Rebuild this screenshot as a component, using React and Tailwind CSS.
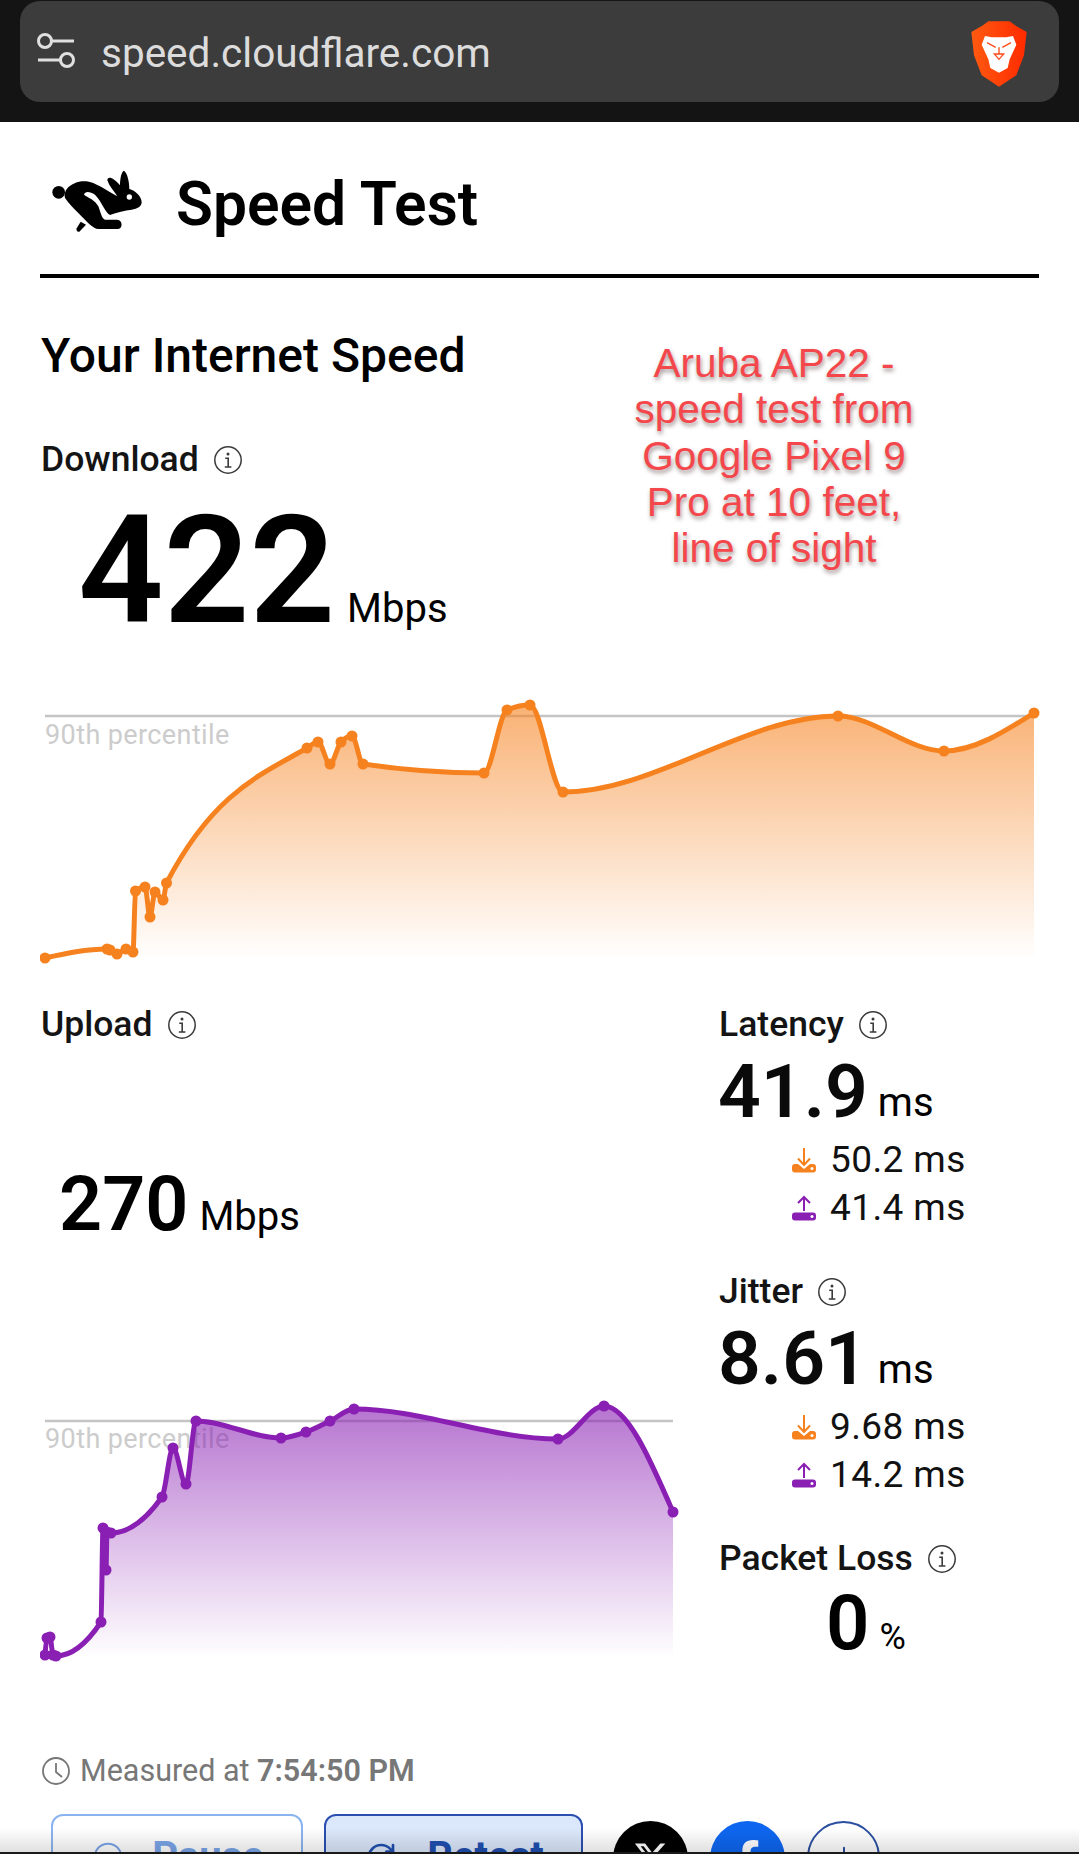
import { CirclePause, Plus, RotateCw } from "lucide-react";
import { FaFacebookF, FaXTwitter } from "react-icons/fa6";

const downloadPoints = [
  [45, 957], [107, 948], [110, 949], [117, 953], [126, 948], [133, 951], [135.5, 890], [145, 886],
  [150, 916], [155, 891], [163, 899], [166.5, 882], [307, 747], [318, 741], [330, 763], [341, 741],
  [352, 735], [363, 763], [484, 772], [507, 709], [530, 704], [563, 791], [838, 715], [944, 750], [1034, 712],
];

const uploadPoints = [
  [45, 1655], [47, 1638], [50, 1637], [53, 1655], [56, 1656], [101, 1622], [103, 1528], [106, 1570],
  [107, 1532], [111, 1533], [162, 1497], [173, 1448], [186, 1484], [196, 1421], [281, 1438], [306, 1432],
  [330, 1421], [354, 1409], [558, 1439], [604, 1406], [673, 1512],
];

// same maths as a monotone-x line
const sign = (v) => (v < 0 ? -1 : 1);
const slope3 = (a, b, c) => {
  const h0 = b[0] - a[0];
  const h1 = c[0] - b[0];
  const s0 = (b[1] - a[1]) / h0;
  const s1 = (c[1] - b[1]) / h1;
  const p = (s0 * h1 + s1 * h0) / (h0 + h1);
  return (sign(s0) + sign(s1)) * Math.min(Math.abs(s0), Math.abs(s1), 0.5 * Math.abs(p)) || 0;
};

const monotonePath = (pts) => {
  const t = pts.map((p, i) => (i === 0 || i === pts.length - 1 ? null : slope3(pts[i - 1], p, pts[i + 1])));
  t[0] = (3 * (pts[1][1] - pts[0][1])) / (pts[1][0] - pts[0][0]) / 2 - t[1] / 2;
  const n = pts.length - 1;
  t[n] = (3 * (pts[n][1] - pts[n - 1][1])) / (pts[n][0] - pts[n - 1][0]) / 2 - t[n - 1] / 2;
  let d = `M${pts[0][0]} ${pts[0][1]}`;
  for (let i = 1; i <= n; i++) {
    const dx = (pts[i][0] - pts[i - 1][0]) / 3;
    d += `C${pts[i - 1][0] + dx} ${pts[i - 1][1] + dx * t[i - 1]} ${pts[i][0] - dx} ${pts[i][1] - dx * t[i]} ${pts[i][0]} ${pts[i][1]}`;
  }
  return d;
};

const Chart = ({ id, points, color, viewBox, width, height, lineY, lineX2, labelY, bottom }) => {
  const line = monotonePath(points);
  const last = points[points.length - 1];
  return (
    <svg width={width} height={height} viewBox={viewBox} className="block">
      <defs>
        <linearGradient id={id} x1="0" y1="0" x2="0" y2="1">
          <stop offset="0" stopColor={color} stopOpacity="0.62" />
          <stop offset="1" stopColor={color} stopOpacity="0" />
        </linearGradient>
      </defs>
      <line x1="45" x2={lineX2} y1={lineY} y2={lineY} stroke="#c4c4c4" strokeWidth="2.5" />
      <text x="45" y={labelY} fill="#cccccc" fontSize="27" fontFamily="Roboto, sans-serif" letterSpacing="0.4">
        90th percentile
      </text>
      <path d={`${line}L${last[0]} ${bottom}L${points[0][0]} ${bottom}Z`} fill={`url(#${id})`} />
      <path d={line} fill="none" stroke={color} strokeWidth="5" strokeLinejoin="round" />
      {points.map((p, i) => (
        <circle key={i} cx={p[0]} cy={p[1]} r="5.5" fill={color} />
      ))}
    </svg>
  );
};

const InfoIcon = () => (
  <svg width="30" height="30" viewBox="0 0 30 30" fill="none" stroke="#3a3a3a" className="shrink-0">
    <circle cx="15" cy="15" r="13.2" strokeWidth="1.5" />
    <circle cx="15" cy="9" r="1.5" fill="#3a3a3a" stroke="none" />
    <path d="M12.2 13.2H15.2V21.8M11.8 22H18.4" strokeWidth="1.6" />
  </svg>
);

const DownIcon = () => (
  <svg width="26" height="26" viewBox="0 0 26 26" className="shrink-0">
    <path d="M1 20C1 18 2 17 4 17H7L13 22L19 17H22C24 17 25 18 25 20V22.5C25 24.5 24 25.5 22 25.5H4C2 25.5 1 24.5 1 22.5Z" fill="#f6821f" />
    <circle cx="21" cy="21.5" r="1.5" fill="#fff" />
    <path d="M13 1V18M7 11.5L13 18L19 11.5" fill="none" stroke="#f6821f" strokeWidth="2" />
  </svg>
);

const UpIcon = () => (
  <svg width="26" height="26" viewBox="0 0 26 26" className="shrink-0">
    <path d="M1 20.5C1 18.5 2 17.5 4 17.5H22C24 17.5 25 18.5 25 20.5V22.5C25 24.5 24 25.5 22 25.5H4C2 25.5 1 24.5 1 22.5Z" fill="#8a1fb3" />
    <circle cx="21" cy="21.5" r="1.5" fill="#fff" />
    <path d="M13 16V2M7 8L13 2L19 8" fill="none" stroke="#8a1fb3" strokeWidth="2" />
  </svg>
);

const Label = ({ children }) => (
  <div className="flex h-10 items-center gap-[14px] text-[35.5px] font-medium text-[#141414]">
    <span>{children}</span>
    <InfoIcon />
  </div>
);

const SubRow = ({ icon, value }) => (
  <div className="flex h-12 items-center gap-[13px] pl-[72px] text-[37px] tracking-[0.4px] text-[#111]">
    {icon}
    <span>{value}</span>
  </div>
);

const Metric = ({ label, value, down, up }) => (
  <div>
    <Label>{label}</Label>
    <div className="-ml-[1px] flex h-[88px] items-end gap-[10px] pb-[4px] leading-none">
      <span className="text-[75px] font-semibold text-[#0a0a0a]">{value}</span>
      <span className="pb-[6px] text-[40px]">ms</span>
    </div>
    <div className="mt-[3px]">
      <SubRow icon={<DownIcon />} value={down} />
      <SubRow icon={<UpIcon />} value={up} />
    </div>
  </div>
);

const Rabbit = () => (
  <svg width="130" height="100" viewBox="0 0 390 300" className="shrink-0">
    <circle cx="86" cy="118" r="19" fill="#000" />
    <path
      fillRule="evenodd"
      fill="#000"
      d="M112 106C125 90 150 82 170 85C195 88 225 110 262 130C250 112 238 100 232 82C232 68 250 72 270 97C270 75 275 55 282 53C292 60 298 85 298 108C315 112 335 130 335 148C335 160 322 168 305 170C285 172 260 178 240 186C225 178 215 145 195 125C180 115 165 113 162 125C175 135 195 140 205 160C212 178 215 197 225 200H262C278 200 280 228 262 228H205C190 228 170 205 150 185C130 165 115 150 105 135C102 125 105 115 112 106Z"
    />
    <circle cx="298" cy="132" r="8" fill="#fff" />
    <path d="M152 206L168 215L148 236C142 238 138 232 140 226Z" fill="#000" />
  </svg>
);

const BraveLogo = () => (
  <svg width="80" height="80" viewBox="0 0 240 240" className="shrink-0">
    <defs>
      <linearGradient id="brave" x1="0" y1="0" x2="1" y2="0">
        <stop offset="0" stopColor="#ff5a10" />
        <stop offset="1" stopColor="#ff2a00" />
      </linearGradient>
    </defs>
    <path d="M72 40L88 28H152L168 40L203 60L195 130L172 190L120 224L68 190L45 130L37 60Z" fill="url(#brave)" />
    <path d="M78 72L98 76H142L162 72L172 98L152 142L146 168L120 182L94 168L88 142L68 98Z" fill="#fff" />
    <path d="M84 92L110 106M156 92L130 106M106 126H134L120 142ZM120 106V128" fill="none" stroke="#ff4a18" strokeWidth="4" />
    <path d="M94 160L120 148L146 160L120 180Z" fill="#fff" />
  </svg>
);

export default function App() {
  return (
    <div className="relative h-[1854px] w-[1079px] overflow-hidden bg-white font-[Roboto,sans-serif] text-black">
      <div className="h-[122px] bg-[#141414] px-5 pt-[1px]">
        <div className="flex h-[101px] items-center rounded-[20px] bg-[#3c3c3c] pl-[16px] pr-[20px]">
          <svg width="40" height="40" viewBox="0 0 40 40" fill="none" stroke="#e0e0e0" strokeWidth="3" className="shrink-0">
            <circle cx="9" cy="9" r="6.5" />
            <path d="M16 9H38M2 28H24" />
            <circle cx="31" cy="28" r="6.5" />
          </svg>
          <span className="mt-[4px] ml-[25px] text-[40.5px] text-[#dcdcdc]">speed.cloudflare.com</span>
          <div className="ml-auto">
            <BraveLogo />
          </div>
        </div>
      </div>

      <div className="px-10">
        <div className="flex h-[156px] items-center border-b-[4px] border-black pt-[10px]">
          <div className="-ml-[10px]">
            <Rabbit />
          </div>
          <h1 className="mt-[4px] ml-[16px] text-[60.5px] font-semibold">Speed Test</h1>
        </div>

        <h2 className="mt-[53px] ml-[1px] text-[48px] leading-[50px] font-medium">Your Internet Speed</h2>

        <div className="mt-[59px] ml-[1px]">
          <Label>Download</Label>
          <div className="mt-[16px] flex items-baseline gap-[12px] pl-[37px] leading-none">
            <span className="text-[150px] font-semibold">422</span>
            <span className="text-[40px]">Mbps</span>
          </div>
        </div>

        <div className="mt-[50px]">
          <Chart
            id="downFill"
            points={downloadPoints}
            color="#f6821f"
            viewBox="40 695 1000 270"
            width={1000}
            height={270}
            lineX2={1034}
            lineY={715}
            labelY={743}
            bottom={958}
          />
        </div>

        <div className="mt-[39px] flex">
          <div className="w-[640px] shrink-0">
            <div className="ml-[1px]">
              <Label>Upload</Label>
            </div>
            <div className="mt-[122px] flex items-baseline gap-[11px] pl-[19px] leading-none">
              <span className="text-[75.5px] font-semibold">270</span>
              <span className="text-[40px]">Mbps</span>
            </div>
            <div className="mt-[152px]">
              <Chart
                id="upFill"
                points={uploadPoints}
                color="#8a1fb3"
                viewBox="40 1395 640 270"
                width={640}
                height={270}
                lineX2={673}
                lineY={1421}
                labelY={1448}
                bottom={1658}
              />
            </div>
          </div>

          <div className="ml-[39px] flex-1">
            <Metric label="Latency" value="41.9" down="50.2 ms" up="41.4 ms" />
            <div className="mt-[40px]">
              <Metric label="Jitter" value="8.61" down="9.68 ms" up="14.2 ms" />
            </div>
            <div className="mt-[40px]">
              <Label>Packet Loss</Label>
              <div className="mt-[6px] flex items-baseline gap-[10px] pl-[107px] leading-none">
                <span className="text-[76px] font-semibold">0</span>
                <span className="text-[36px]">%</span>
              </div>
            </div>
          </div>
        </div>

        <div className="mt-[86px] flex h-10 items-center gap-[9px] pl-[1px] text-[30.5px] text-[#777]">
          <svg width="30" height="30" viewBox="0 0 30 30" fill="none" stroke="#777" strokeWidth="1.8">
            <circle cx="15" cy="15" r="13" />
            <path d="M15 7V16L21 21" />
          </svg>
          <span>
            Measured at <b className="font-semibold">7:54:50 PM</b>
          </span>
        </div>

        <div className="mt-[23px] ml-[11px] flex items-start">
          <button className="flex h-[86px] w-[252px] items-center justify-center gap-[28px] rounded-xl border-[2.5px] border-[#8ab4f0] bg-white pl-[2px] text-[40px] font-bold text-[#7aa5e8]">
            <CirclePause size={32} strokeWidth={1.5} />
            Pause
          </button>
          <button className="ml-[21px] flex h-[86px] w-[259px] items-center justify-center gap-[30px] rounded-xl border-[2.5px] border-[#2a4fb0] bg-[#dbe8fb] pl-[2px] text-[40px] font-bold text-[#1f4fb0]">
            <RotateCw size={32} strokeWidth={2} />
            Retest
          </button>
          <div className="mt-[7px] ml-[30px] flex h-[75px] w-[75px] items-center justify-center rounded-full bg-black text-white">
            <FaXTwitter size={36} />
          </div>
          <div className="mt-[7px] ml-[22px] flex h-[75px] w-[75px] items-center justify-center rounded-full bg-[#0e66f0] text-white">
            <FaFacebookF size={36} />
          </div>
          <div className="mt-[7px] ml-[22px] flex h-[73px] w-[73px] items-center justify-center rounded-full border-2 border-[#2a4fa0] text-[#2a4fa0]">
            <Plus size={32} strokeWidth={1.5} />
          </div>
        </div>
      </div>

      {/* note pasted over the screenshot */}
      <div className="absolute top-[340px] left-[594px] w-[360px] text-center font-['Liberation_Sans',sans-serif] text-[40.5px] leading-[46.3px] text-[#f4474c] [text-shadow:1px_3px_4px_rgba(90,60,60,0.55)]">
        Aruba AP22 -<br />
        speed test from<br />
        Google Pixel 9<br />
        Pro at 10 feet,<br />
        line of sight
      </div>

      <div className="absolute bottom-[2px] left-0 h-[24px] w-full bg-gradient-to-b from-transparent to-[#0000001f]" />
      <div className="absolute bottom-0 left-0 h-[2px] w-full bg-[#1a1a1a]" />
    </div>
  );
}
